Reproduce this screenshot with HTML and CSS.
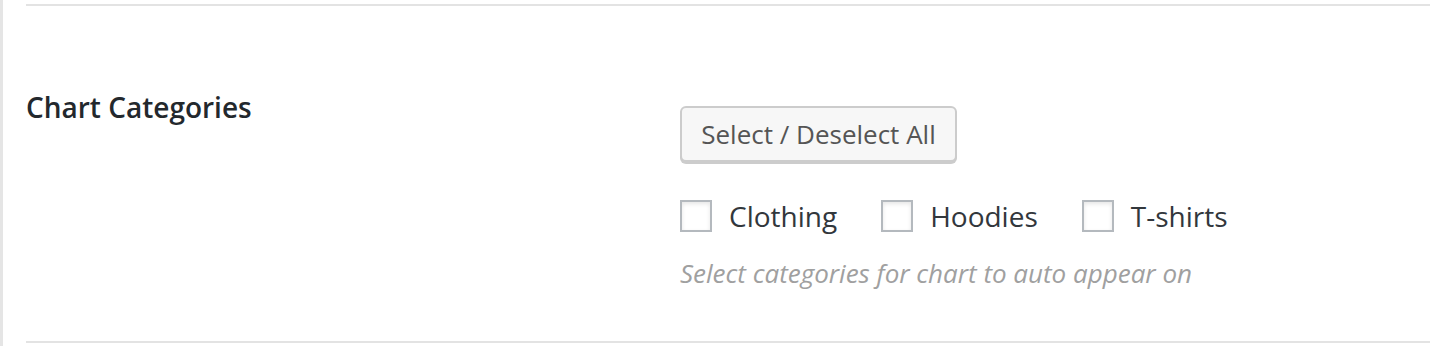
FILE: index.html
```html
<!DOCTYPE html>
<html>
<head>
<meta charset="utf-8">
<link rel="stylesheet" href="styles.css">
</head>
<body>
<div class="panel">
  <div class="section">
    <div class="row">
      <div class="label-col">Chart Categories</div>
      <div class="field-col">
        <button class="button" type="button">Select / Deselect All</button>
        <div class="checks">
          <label class="check"><span class="box"></span><span>Clothing</span></label>
          <label class="check"><span class="box"></span><span>Hoodies</span></label>
          <label class="check"><span class="box"></span><span>T-shirts</span></label>
        </div>
        <p class="desc">Select categories for chart to auto appear on</p>
      </div>
    </div>
  </div>
</div>
</body>
</html>
```

FILE: styles.css
```css
html, body {
  margin: 0;
  padding: 0;
  background: #fff;
}
body {
  font-family: "Open Sans", "Noto Sans", sans-serif;
  color: #23282d;
  width: 1430px;
  height: 346px;
  overflow: hidden;
}
.panel {
  box-sizing: border-box;
  height: 346px;
  border-left: 3px solid #e5e5e5;
  padding-top: 4px;
}
.section {
  box-sizing: border-box;
  margin-left: 23px;
  height: 339px;
  border-top: 2px solid #e3e3e3;
  border-bottom: 2px solid #e3e3e3;
}
.row {
  display: grid;
  grid-template-columns: 654px 1fr;
}
.label-col {
  padding-top: 81px;
  font-size: 28px;
  line-height: 40px;
  font-weight: 600;
  color: #23282d;
}
.field-col {
  padding-top: 100px;
  display: flex;
  flex-direction: column;
  align-items: flex-start;
}
.button {
  box-sizing: border-box;
  height: 56px;
  width: 277px;
  padding: 0;
  margin: 0;
  white-space: nowrap;
  text-align: center;
  font-family: "Open Sans", "Noto Sans", sans-serif;
  font-size: 26px;
  color: #555;
  background: #f7f7f7;
  border: 2px solid #cccccc;
  border-radius: 6px;
  box-shadow: 0 2px 0 #cccccc;
  line-height: 50px;
}
.checks {
  display: flex;
  align-items: center;
  gap: 44px;
  margin-top: 38px;
}
.check {
  display: flex;
  align-items: center;
  gap: 17px;
  font-size: 28px;
  line-height: 32px;
  color: #32373c;
}
.box {
  box-sizing: border-box;
  width: 32px;
  height: 32px;
  border: 2px solid #b4b9be;
  background: #fff;
  box-shadow: inset 0 2px 4px rgba(0,0,0,0.1);
}
.desc {
  margin: 23px 0 0;
  font-size: 26px;
  line-height: 36px;
  font-style: italic;
  color: #a0a0a0;
}
```
